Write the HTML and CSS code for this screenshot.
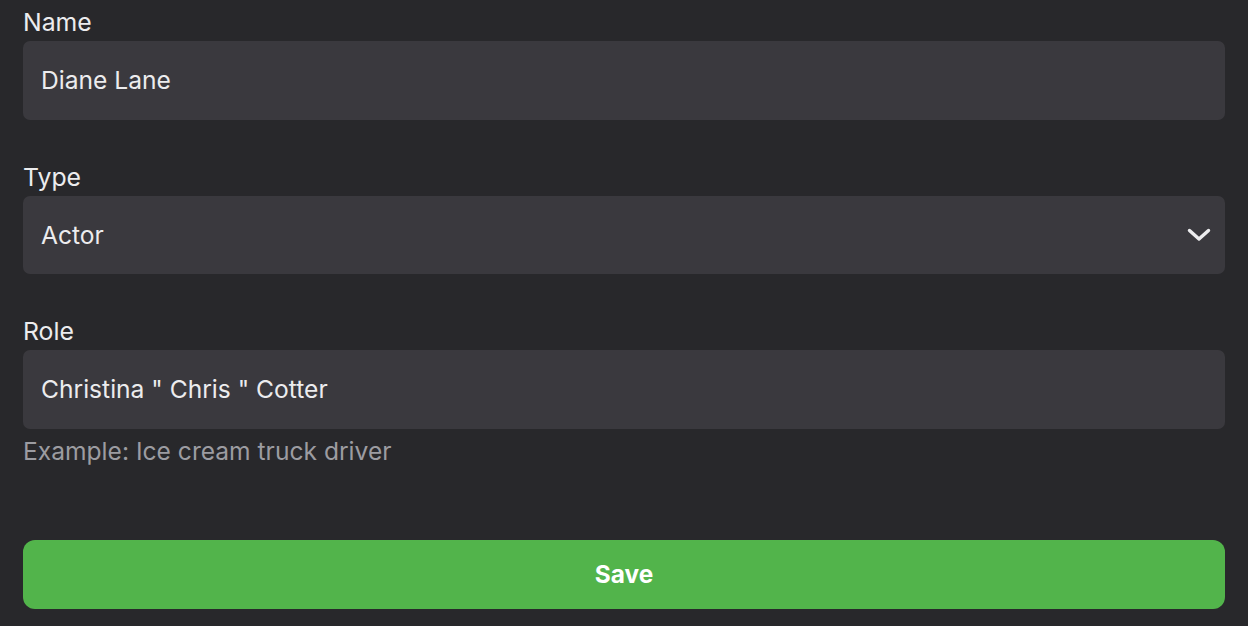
FILE: index.html
```html
<!DOCTYPE html>
<html>
<head>
<meta charset="utf-8">
<link rel="stylesheet" href="styles.css">
</head>
<body>
<form class="form">
  <div class="field">
    <label class="label">Name</label>
    <div class="input">Diane Lane</div>
  </div>
  <div class="field">
    <label class="label">Type</label>
    <div class="input select">
      <span>Actor</span>
      <svg class="chevron" width="24" height="14" viewBox="0 0 24 14"><path d="M2.5 2.5 L12 11 L21.5 2.5" fill="none" stroke="#ececee" stroke-width="3.4" stroke-linecap="round" stroke-linejoin="round"/></svg>
    </div>
  </div>
  <div class="field">
    <label class="label">Role</label>
    <div class="input">Christina " Chris " Cotter</div>
    <div class="hint">Example: Ice cream truck driver</div>
  </div>
  <button type="button" class="save">Save</button>
</form>
</body>
</html>
```
FILE: styles.css
```css
html, body {
  margin: 0;
  padding: 0;
  background: #28282b;
  font-family: Inter, "Noto Sans", sans-serif;
  color: #ececee;
}
.form {
  padding: 6px 23px 0 23px;
  display: flex;
  flex-direction: column;
}
.field {
  display: flex;
  flex-direction: column;
  margin-bottom: 41px;
}
.label {
  font-size: 24.8px;
  line-height: 32px;
  margin-bottom: 3px;
  color: #ececee;
}
.input {
  box-sizing: border-box;
  height: 78.5px;
  background: #3a393e;
  border-radius: 7px;
  padding: 0 18px;
  display: flex;
  align-items: center;
  font-size: 24.6px;
  color: #ececee;
}
.select {
  justify-content: space-between;
  padding-right: 14px;
}
.chevron {
  display: block;
}
.hint {
  font-size: 24.6px;
  line-height: 32px;
  margin-top: 6px;
  color: #9c9ca1;
}
.field:last-of-type {
  margin-bottom: 73px;
}
.save {
  height: 69px;
  border: none;
  border-radius: 12px;
  background: #52b44b;
  color: #ffffff;
  font-family: Inter, "Noto Sans", sans-serif;
  font-size: 24.4px;
  font-weight: 700;
  cursor: pointer;
}
```
